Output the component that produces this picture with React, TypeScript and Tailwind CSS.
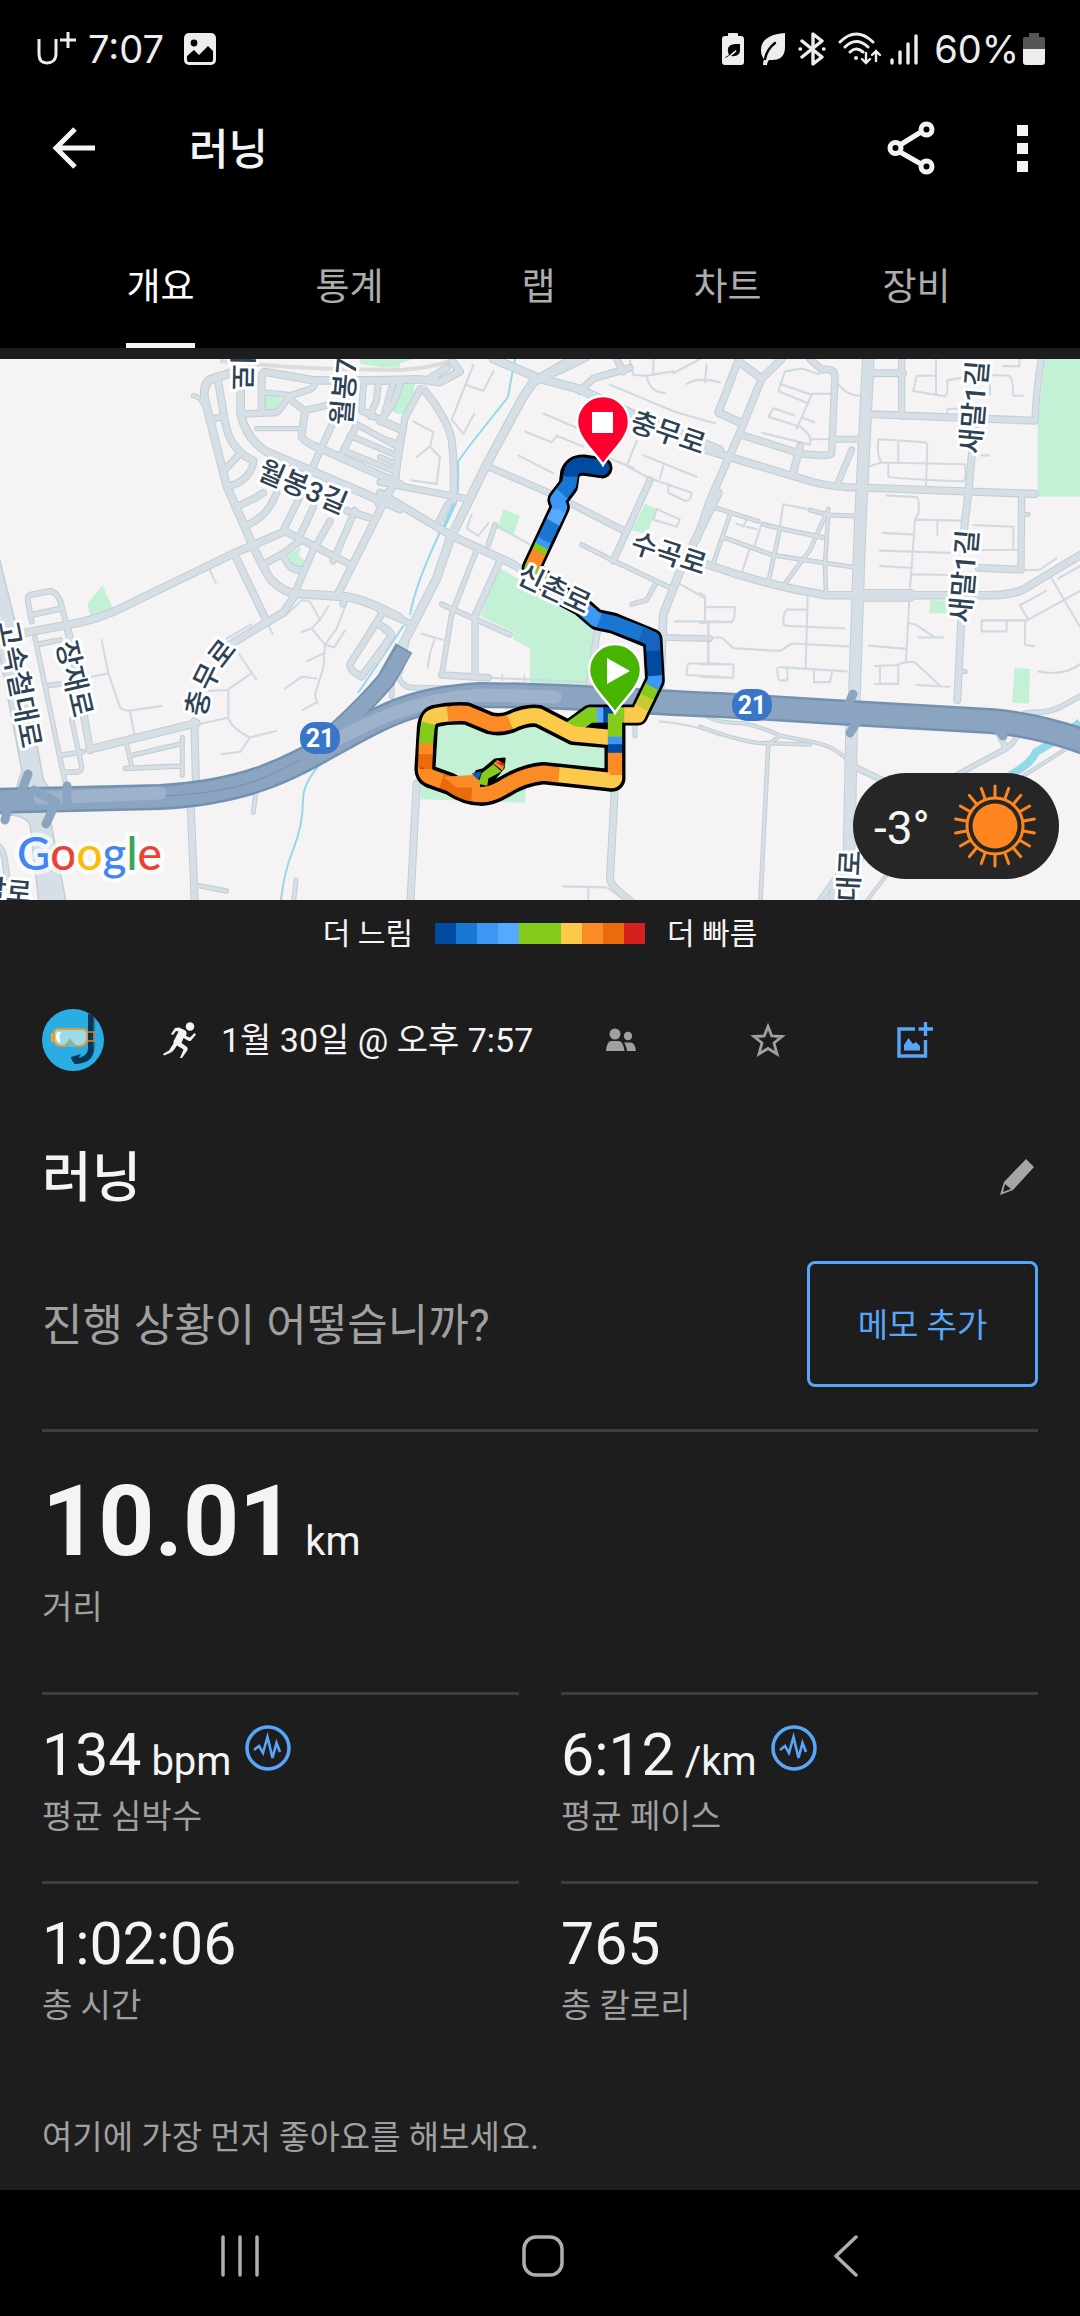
import React from "react";
import { clsx } from "clsx";

type Road = [width: number, d: string];

type Tile = {
  transform: string;
  parks: string[];
  roads: Road[];
  lanes: string;
};

// each tile keeps its own drawing units, see the transforms
const tiles: Tile[] = [
  {
    transform: "translate(0 350) scale(0.3333 0.3571)",
    parks: [
      "M790 125H850L830 165H790Z",
      "M262 710L290 680L307 658L340 725L272 747Z",
      "M855 580L905 550L895 575L915 590L905 612L875 605Z",
      "M1080 20H1200V50Q1130 50 1080 38Z",
      "M1200 130L1180 175L1200 180Z",
    ],
    roads: [
      [20, "M40 798L200 770Q300 755 380 715L700 570L850 510"],
      [14, "M95 760L85 710Q78 690 95 685L150 675Q165 675 180 700L200 770"],
      [14, "M95 742L180 725"],
      [20, "M200 770L215 830L270 1120"],
      [12, "M105 805L195 1210M110 825L180 812M145 940L180 935"],
      [12, "M215 1035L245 1165Q245 1180 230 1182H190M180 1135L250 1125"],
      [20, "M270 1118L590 1045"],
      [11, "M380 1105L395 1165M395 1135L545 1102M375 1172L545 1165M547 1085V1190"],
      [20, "M583 1040L588 1215M572 1270L585 1568"],
      [20, "M680 830L850 735L890 680"],
      [20, "M705 575L795 750"],
      [22, "M700 62L640 80Q605 90 615 140L680 380L760 550Q790 610 810 640Q850 680 890 682L1020 690Q1080 690 1200 750"],
      [11, "M580 128Q600 130 612 155"],
      [20, "M655 90L675 200Q690 280 760 310"],
      [16, "M625 195L665 188"],
      [22, "M722 110V180Q740 250 800 285L1200 445"],
      [17, "M722 180L830 175Q840 170 865 130L930 110Q945 105 945 85"],
      [20, "M785 165V75Q785 62 800 62L940 85L1200 85"],
      [14, "M785 118L860 125"],
      [17, "M865 135L915 170L1000 150"],
      [20, "M915 170L905 240Q905 255 960 275L1200 375"],
      [11, "M770 220H905"],
      [18, "M1010 180L940 325M1070 210L1020 300"],
      [17, "M1090 100L1085 170L1200 220M1135 95L1130 140L1110 185M1180 90L1150 190"],
      [15, "M1065 205L1200 275M1050 240L1190 295M1040 285L1185 340"],
      [20, "M1200 250L1185 370L1150 430L1010 690"],
      [18, "M690 380Q740 370 760 320M675 335L720 290M705 440Q760 420 790 400M740 490Q800 470 830 400"],
      [18, "M900 410L850 505L1050 600M940 440L895 530M990 480L940 560L880 690M1065 450L1000 590M1040 450L1110 470"],
      [18, "M790 600L850 570L900 535M850 575Q870 620 900 615"],
      [18, "M1145 740L1050 880Q1045 895 1085 915L1175 800Q1180 790 1130 765"],
      [20, "M1030 690V710"],
      [11, "M770 1225L760 1295M888 1485L878 1568M595 1500L680 1515"],
      [16, "M-4 1390Q12 1400 16 1440L24 1500"],
    ],
    lanes:
      "M305 812L325 905L360 1000Q365 1010 390 1010L485 997M390 1010L403 1075M275 915L325 905M718 852L768 922M755 905L685 950V1030Q695 1060 750 1085L828 1067M750 1085L722 1125L665 1132M595 1048L685 1030M625 955L685 952M628 612L648 655M800 760L818 795M680 808L755 768M855 745L905 700L930 705L960 755L935 780L905 790M985 718L960 755M1035 720L1010 780L975 825L935 780M975 825L1003 833L1035 785M975 825L970 890L945 965L952 990M970 850L920 872M950 920L905 915L855 948M952 985L908 1008",
  },
  {
    transform: "translate(380 350) scale(0.3333 0.3571)",
    parks: [
      "M360 610L300 745L400 790V810L450 835V940L615 945L645 770Z",
      "M165 1045L300 1045L450 1040L560 1100L680 1110V1180L300 1230L165 1170Z",
      "M120 1200L122 1258L435 1268L438 1215L300 1250Z",
      "M60 95L105 90L100 130L75 182L35 170Z",
      "M0 20H110Q50 45 0 50Z",
      "M370 445L420 465L400 520L352 500Z",
      "M795 430L830 445L800 515L755 505Z",
    ],
    roads: [
      [20, "M-10 85L120 82L180 90L240 60L215 30M150 80L200 50"],
      [20, "M135 115Q200 190 215 250Q225 330 220 420"],
      [18, "M60 95L40 150L0 200M120 110L75 190L40 380L-5 430"],
      [14, "M0 200L60 225M0 245L60 265M0 300L50 320"],
      [17, "M0 370L250 415"],
      [20, "M0 400L215 520L400 600L650 760"],
      [24, "M580 25L460 90L430 130L320 320L210 530L170 640L60 840"],
      [22, "M340 25L480 80L600 110L760 180L1020 280"],
      [18, "M480 80Q560 50 620 20M600 115L640 80L750 50M710 25L730 60"],
      [17, "M320 325L520 405L740 510"],
      [18, "M205 430L178 478"],
      [13, "M290 560L215 740L185 910M345 490L325 545"],
      [18, "M360 590L285 745V910"],
      [13, "M185 712L390 797"],
      [17, "M185 910L325 918"],
      [16, "M0 730L90 765L60 900M0 770L35 800L-10 870"],
      [13, "M45 860Q50 940 90 945L300 950M35 900V970"],
      [18, "M655 770L625 950"],
      [11, "M605 545L700 590L870 665"],
      [18, "M810 365L700 590"],
      [22, "M1015 400L900 620L850 740L840 960"],
      [11, "M830 650L800 700L755 712M765 1045V1080"],
      [15, "M850 805L990 808"],
      [20, "M110 1215L90 1568M705 1220L690 1480Q690 1500 760 1550"],
    ],
    lanes:
      "M280 42L215 195M260 98L310 115L340 60M215 195L250 235L283 178M100 200L160 230L150 270L110 300M150 270L180 300L170 375L95 365M275 460L260 500L295 520L325 485M345 490L450 545M435 228L515 258L530 240L610 270M490 178L600 222M415 295L520 345M690 97L890 175L1005 205M790 295L950 355M770 255L740 325L810 360L860 375L935 400Q930 430 910 420L865 400V375M850 325L840 360M680 300L760 330M830 445L900 475L890 495L820 475L830 445M125 795L190 812M165 805L150 850L143 890M330 918L620 930M367 910V925M433 912V928M890 650L975 695V760M885 760H1020M985 760V880M1020 878H925Q920 885 920 910L1020 915M550 1502L680 1505L720 1530M625 1505V1568M750 30L760 70L800 72L880 60M820 25V65M800 72Q810 120 855 120M920 95Q950 75 1020 90M880 65L960 25M975 90L980 40M0 1058Q80 1015 150 1010M840 1040Q950 1050 1020 1080",
  },
  {
    transform: "translate(700 350) scale(0.3333 0.3571)",
    parks: [
      "M1035 20H1140V410H1013V200Z",
      "M690 700L740 702V738H688Z",
      "M943 890L990 893L987 990L937 988Z",
    ],
    roads: [
      [34, "M505 20L480 500L463 980M455 1050L447 1420L380 1590"],
      [20, "M115 30L55 175L125 205M245 25L185 80L120 230L30 420L-10 530M120 35L185 80"],
      [18, "M330 25L365 55Q405 50 405 75L395 290Q390 300 300 290L125 238"],
      [20, "M300 270L278 350"],
      [16, "M400 250H480M415 370L455 280"],
      [19, "M0 275L340 370Q400 385 480 385L1005 403"],
      [18, "M520 65H610M605 20V185M515 180L1005 198Q1010 100 1025 20"],
      [20, "M825 200L805 400L790 520M785 740L772 980"],
      [18, "M965 405L963 615L835 610"],
      [10, "M963 460H985M785 900H797"],
      [20, "M20 600Q200 660 380 687H870Q950 685 980 665L1140 575"],
      [32, "M490 687H630"],
      [10, "M40 440L175 480M90 460L35 610M70 525L220 575L460 608M190 488L240 500L370 525M240 500L205 650M385 445L330 560L250 660M385 460L375 600L378 680M330 448L385 462L465 465"],
      [13, "M770 1190L920 1115Q960 1090 965 1030Q960 1015 1000 1015Q1050 1015 1080 1000L1140 970"],
      [16, "M900 1080L915 1110"],
      [8, "M975 1190L1110 1110H1140M0 1055Q100 1090 170 1100L330 1105M20 1025Q50 1045 130 1045Q200 1060 240 1080L350 1100Q400 1110 440 1145M240 1080L205 1105M480 1568L560 1470"],
      [10, "M205 1100L180 1568"],
      [15, "M470 1170L560 1210M340 1568L430 1450"],
    ],
    lanes:
      "M358 68L305 52L255 60L235 115L325 150M240 95L335 125L290 220M335 123H395M283 183L220 163L205 187L300 215Q340 240 330 265L187 232M308 190L342 202M330 250H390M410 90Q440 130 485 128M708 25V125M708 72H650L640 115L735 130Q745 120 742 85L800 75M870 125V70L925 72Q940 75 940 128H968M908 45H958V25M742 175V165H800M510 325L545 315Q530 300 535 250L670 258Q682 258 682 270L678 380M595 255V315M565 315V355Q565 360 790 368Q800 360 795 320L545 315M845 295H867M560 407L650 412Q660 415 655 460L645 475L630 670M645 475L785 478M712 480V518M548 512L640 517M540 562L750 568M540 605L635 610M635 628L745 630M820 490L940 495V558M845 560H950M965 617L1020 615L1070 583M250 432L320 445M250 432L240 490M185 485L165 545M110 487L170 502M140 475L130 495M150 555L125 625M0 680L15 690V762H95Q105 755 105 720H15M0 765H25V880M0 880H100V918L0 915M30 805H65L100 835L240 843L275 822L445 830M323 690L317 888M323 727H265Q250 727 250 765Q250 773 270 773L433 780M240 888L440 900M262 888V925H240Q232 925 232 890M342 895V930H390L397 897M628 700L618 870M507 828L618 837M628 765L645 768L705 805M655 805H730M525 885L590 882Q620 870 645 875L720 940M595 885V935H525M540 885V935M650 938L748 943M1038 675L960 715L985 755L1140 675M1055 640L1140 775M1075 640L1140 605M985 757H845V788H920V757M975 757V825L1003 830M1015 900Q1090 915 1140 880",
  },
];

const routeLoop =
  "M705 1020L705 1200Q702 1207 690 1205L490 1185Q430 1190 370 1225Q330 1247 300 1245Q260 1245 210 1215L150 1195Q133 1188 135 1170L142 1060Q145 1030 165 1025Q210 1015 260 1018L330 1045Q360 1052 390 1042Q440 1020 475 1025L580 1075L705 1085";
const routeTail =
  "M580 1056L630 1022L775 1022L825 925L818 810L700 765L650 755L600 715L530 680L455 610L500 520L540 440L532 420L565 380L570 345Q580 322 610 322L668 330";

const routePaces: [color: string, d: string][] = [
  ["#84cc1b", "M570 1062L630 1022H652"],
  ["#fcca4a", "M145 1050Q145 1030 165 1025Q180 1021 205 1019"],
  ["#fb8b24", "M203 1020Q230 1016 260 1018L330 1045Q360 1052 392 1041"],
  ["#fcca4a", "M390 1042Q440 1020 475 1025L580 1075L690 1085"],
  ["#55a9ff", "M650 1022H672"],
  ["#004a9f", "M670 1022H700"],
  ["#84cc1b", "M705 1018V1085"],
  ["#3d97f5", "M705 1083V1106"],
  ["#004a9f", "M705 1104V1130"],
  ["#fb8b24", "M705 1128V1192"],
  ["#fcca4a", "M705 1190V1200Q702 1207 690 1205L535 1189"],
  ["#fb8b24", "M537 1190L490 1185Q430 1190 370 1225Q330 1247 300 1245Q285 1245 265 1240"],
  ["#ea6a0c", "M275 1242Q250 1240 210 1215L180 1205"],
  ["#fb8b24", "M185 1207L150 1195Q133 1188 135 1168"],
  ["#ea6a0c", "M135 1172L137 1130"],
  ["#fb8b24", "M137 1132L138 1100"],
  ["#84cc1b", "M138 1102L142 1060L145 1045"],
  ["#84cc1b", "M700 1022H735"],
  ["#fcca4a", "M733 1022H775L786 1000"],
  ["#c6cb35", "M785 1002L803 968"],
  ["#84cc1b", "M801 971L817 940"],
  ["#3d97f5", "M816 943L825 925V910"],
  ["#004a9f", "M825 912L820 840"],
  ["#1565c0", "M820 842L818 810L780 793"],
  ["#1976d2", "M783 795L700 765L655 756"],
  ["#3d97f5", "M658 757L645 752L600 715"],
  ["#55a9ff", "M602 716L530 680L490 643"],
  ["#84cc1b", "M492 645L455 610L460 600"],
  ["#fb8b24", "M459 602L480 560"],
  ["#84cc1b", "M478 564L486 547"],
  ["#3d97f5", "M485 549L494 531"],
  ["#1976d2", "M493 533L520 480"],
  ["#55a9ff", "M519 482L538 445"],
  ["#3d97f5", "M537 447L540 440L532 420L548 400"],
  ["#1976d2", "M546 402L568 375L572 350"],
  ["#004a9f", "M572 354Q572 322 610 322L668 330"],
];

const mapLabels: { text: string; at: string; anchor?: "start" | "end" }[] = [
  { text: "월봉3길", at: "translate(299 496) rotate(23)" },
  { text: "충무로", at: "translate(665 442) rotate(19)" },
  { text: "수곡로", at: "translate(666 563) rotate(18)" },
  { text: "신촌로", at: "translate(550 598) rotate(25)" },
  { text: "새말1길", at: "translate(984 408) rotate(-85)" },
  { text: "새말1길", at: "translate(974 577) rotate(-85)" },
  { text: "고속철대로", at: "translate(10 686) rotate(79)" },
  { text: "장재로", at: "translate(65 681) rotate(77)" },
  { text: "월봉7길", at: "translate(351 426) rotate(-85)", anchor: "start" },
  { text: "대로", at: "translate(232 390) rotate(91)", anchor: "end" },
  { text: "대로", at: "translate(858 902) rotate(-87)", anchor: "start" },
  { text: "할로", at: "translate(31 903) rotate(5)", anchor: "end" },
];

const legendColors = [
  "bg-[#004a9f]",
  "bg-[#1976d2]",
  "bg-[#3d97f5]",
  "bg-[#55a9ff]",
  "bg-[#84cc1b]",
  "bg-[#84cc1b]",
  "bg-[#fcca4a]",
  "bg-[#fb8b24]",
  "bg-[#ea6a0c]",
  "bg-[#d61f1f]",
];

const tabs = ["개요", "통계", "랩", "차트", "장비"];

const stats = [
  { value: "134", unit: "bpm", label: "평균 심박수", chart: true },
  { value: "6:12", unit: "/km", label: "평균 페이스", chart: true },
  { value: "1:02:06", label: "총 시간" },
  { value: "765", label: "총 칼로리" },
];

const PIN = "M0 0C-6 -11 -26 -26 -26 -43A26 26 0 0 1 26 -43C26 -26 6 -11 0 0Z";

const StatusBar = () => (
  <div className="flex h-[98px] items-center justify-between pr-[35px] pl-9 text-[38px] text-[#ededed] font-[Inter,sans-serif]">
    <div className="flex items-center">
      <svg width="40" height="34" viewBox="0 0 40 34" fill="none" stroke="currentColor" strokeWidth="3">
        <path d="M3 7V22C3 28 6 31 11 31S20 28 20 22V7M32 0V16M24 8H40" />
      </svg>
      <span className="ml-3">7:07</span>
      <svg className="ml-5" width="32" height="32" viewBox="0 0 32 32">
        <rect width="32" height="32" rx="5" fill="currentColor" />
        <circle cx="10" cy="10" r="3.4" fill="#000" />
        <path d="M3 23L10 17L15 22L24 13L29 18V27Q29 29 27 29H5Q3 29 3 27Z" fill="#000" />
      </svg>
    </div>
    <div className="flex items-center">
      <svg width="22" height="32" viewBox="0 0 22 32">
        <path d="M7 0H15Q16 0 16 1V3H19Q22 3 22 6V29Q22 32 19 32H3Q0 32 0 29V6Q0 3 3 3H6V1Q6 0 7 0Z" fill="currentColor" />
        <path d="M18 11V17Q18 24 9 23Q16 18 14 17Q12 18 8 22Q4 25 3 25Q3 24 7 22Q3 12 13 11Z" fill="#000" />
      </svg>
      <svg className="ml-4" width="26" height="34" viewBox="0 0 26 34">
        <path d="M25 1V15Q25 28 12 28H9Q7 30 7 33H3Q3 30 4 27Q1 24 1 18Q1 3 25 1Z" fill="currentColor" />
        <path d="M15 11Q7 17 5 27" stroke="#000" strokeWidth="2.5" fill="none" strokeLinecap="round" />
      </svg>
      <svg className="ml-3" width="28" height="34" viewBox="0 0 28 34" fill="none" stroke="currentColor" strokeWidth="3.4" strokeLinejoin="round" strokeLinecap="round">
        <path d="M4 9L24 25L15 32V2L24 9L4 25M2 17H2.5M25.5 17H26" />
      </svg>
      <svg className="ml-3" width="44" height="34" viewBox="0 0 44 34" fill="none" stroke="currentColor" strokeWidth="3" strokeLinecap="round">
        <path d="M2 10Q18 -6 35 10M7 15Q18 4 30 15M12 20Q18 14 25 20" />
        <circle cx="18" cy="26" r="2" fill="currentColor" stroke="none" />
        <path d="M28 21V31M24 27L28 31L32 27M38 29V19M34 23L38 19L42 23" strokeWidth="2.4" />
      </svg>
      <svg className="ml-2" width="28" height="32" viewBox="0 0 28 32" stroke="currentColor" strokeWidth="3.4" strokeLinecap="round">
        <path d="M2 27V30M10 19V30M18 11V30M26 3V30" />
      </svg>
      <span className="ml-4">60%</span>
      <svg className="ml-1" width="22" height="32" viewBox="0 0 22 32">
        <path d="M6 0H16V4H20Q22 4 22 6V16H0V6Q0 4 2 4H6Z" fill="#555" />
        <path d="M0 16H22V29Q22 32 19 32H3Q0 32 0 29Z" fill="currentColor" />
      </svg>
    </div>
  </div>
);

const AppBar = () => (
  <div className="flex h-[100px] items-center px-[52px] text-[#f4f4f4]">
    <button aria-label="뒤로">
      <svg width="43" height="42" viewBox="0 0 43 42" fill="none" stroke="currentColor" strokeWidth="5">
        <path d="M23 2L4 21L23 40M4 21H43" />
      </svg>
    </button>
    <h1 className="ml-[94px] pt-1 text-[43px] leading-[50px] font-medium">러닝</h1>
    <button aria-label="공유" className="ml-auto">
      <svg width="48" height="54" viewBox="0 0 48 54" fill="none" stroke="currentColor" strokeWidth="5">
        <path d="M13 24L34 11M13 31L34 43" />
        <circle cx="8.5" cy="27" r="5.5" />
        <circle cx="39.5" cy="8.5" r="5.5" />
        <circle cx="39.5" cy="45.5" r="5.5" />
      </svg>
    </button>
    <button aria-label="더보기" className="ml-[82px] flex flex-col gap-[7px]">
      <span className="size-[11px] bg-current" />
      <span className="size-[11px] bg-current" />
      <span className="size-[11px] bg-current" />
    </button>
  </div>
);

const Tabs = () => (
  <nav role="tablist" className="grid grid-cols-5 justify-items-center pr-[69px] pl-[66px]">
    {tabs.map((tab, i) => (
      <button
        key={tab}
        role="tab"
        aria-selected={i === 0}
        className={clsx(
          "h-[150px] border-b-[5px] pt-[34px] text-[37px]",
          i === 0 ? "border-[#f4f4f4] text-white" : "border-transparent text-[#adadad]",
        )}
      >
        {tab}
      </button>
    ))}
  </nav>
);

const Shield = ({ at }: { at: string }) => (
  <g transform={at}>
    <rect x="-20" y="-16" width="40" height="32" rx="15" fill="#3a76c8" />
    <text y="9" textAnchor="middle" className="fill-white text-[25px] font-bold">
      21
    </text>
  </g>
);

const RouteMap = () => (
  <svg className="block w-full" viewBox="0 359 1080 541" role="img" aria-label="러닝 경로">
    <rect y="359" width="1080" height="541" fill="#f5f3f4" />
    {tiles.map((tile) => (
      <g key={tile.transform} transform={tile.transform} fill="#c3f1d5">
        {tile.parks.map((d) => (
          <path key={d} d={d} />
        ))}
      </g>
    ))}
    <g fill="none" stroke="#93d9ea">
      <path d="M515 359L510 385Q509 398 505 401L470 445L457 463" strokeWidth="2" />
      <path d="M457 461Q458 500 454 505L441 533" strokeWidth="4" />
      <path d="M441 530Q415 585 410 615" strokeWidth="2" />
      <path d="M404 625L358 693M332 753Q303 778 303 800Q303 825 293 850Q284 872 281 900" strokeWidth="2" />
      <path d="M1010 775Q1030 765 1036 752L1060 738L1080 722" strokeWidth="8" />
      <path d="M866 852L858 866" strokeWidth="4" />
    </g>
    <path d="M220 361Q300 370 400 370Q430 368 450 361" fill="none" stroke="#dcdcde" strokeWidth="4" />
    {tiles.map((tile) => (
      <g key={tile.transform} transform={tile.transform} fill="none" stroke="#cfdae2" strokeWidth="6" strokeLinejoin="round" strokeLinecap="round">
        <path d={tile.lanes} />
      </g>
    ))}
    <path
      d="M-4 545L15 621L43 778Q46 789 56 789L50 818L68 912H40L30 825Q26 814 -4 814V789H16L22 771L-4 636Z"
      fill="#d6dfe6"
      stroke="#c2ced5"
      strokeWidth="1.5"
    />
    {tiles.map((tile) => (
      <g key={tile.transform} transform={tile.transform} fill="none" stroke="#c2ced5" strokeLinejoin="round" strokeLinecap="round">
        {tile.roads.map(([width, d]) => (
          <path key={d} d={d} strokeWidth={width + 4} />
        ))}
      </g>
    ))}
    {tiles.map((tile) => (
      <g key={tile.transform} transform={tile.transform} fill="none" stroke="#d6dfe6" strokeLinejoin="round" strokeLinecap="round">
        {tile.roads.map(([width, d]) => (
          <path key={d} d={d} strokeWidth={width - 2} />
        ))}
      </g>
    ))}
    <circle cx="424" cy="387" r="2" fill="#f5f3f4" stroke="#c2ced5" />

    {/* route 21 */}
    <g fill="none" strokeLinejoin="round">
      <g stroke="#7391b0">
        <path d="M404 648L386 680Q365 705 335 732" strokeWidth="19" />
        <path d="M-10 801L160 797C250 792 290 768 340 740C380 718 410 699 480 695C560 695 640 702 720 705L850 713L990 721Q1040 725 1090 744" strokeWidth="26" />
      </g>
      <g stroke="#8ba5c1">
        <path d="M404 650L386 680Q365 705 335 732" strokeWidth="15" />
        <path d="M-10 801L160 797C250 792 290 768 340 740C380 718 410 699 480 695C560 695 640 702 720 705L850 713L990 721Q1040 725 1090 744" strokeWidth="21" />
      </g>
      <path d="M40 798L160 793M320 748C370 722 410 700 480 695L555 697" stroke="#9fb2cb" strokeWidth="13" strokeLinecap="round" />
      <path d="M165 796C250 791 270 775 300 760" stroke="#7391b0" />
      <path d="M5 820L10 798M22 790L28 774M46 824L56 802L34 790M67 786V806M844 714L853 694M850 733L858 720M997 728L1003 736" stroke="#8ba5c1" strokeWidth="9" strokeLinecap="round" />
    </g>

    <g transform="translate(380 350) scale(0.3333 0.3571)" fill="none" strokeLinejoin="round">
      <g stroke="#000" strokeWidth="63" strokeLinecap="round">
        <path d={routeLoop} />
        <path d={routeTail} strokeWidth="59" />
      </g>
      <path d="M275 1205L290 1180L310 1175L345 1148L373 1145L370 1170L330 1215Z" fill="#000" stroke="#000" strokeWidth="8" />
      <g strokeWidth="43">
        {routePaces.map(([color, d]) => (
          <path key={d} d={d} stroke={color} />
        ))}
      </g>
      <path d="M650 328L668 330" stroke="#004a9f" strokeWidth="41" strokeLinecap="round" />
      <path d="M190 1195L280 1190L300 1205V1225H230Z" fill="#fb8b24" />
      <path d="M275 1185L305 1180L295 1205Z" fill="#0d5cb5" />
      <path d="M295 1215L305 1185L340 1160L365 1180L325 1200L322 1220Z" fill="#84cc1b" />
      <path d="M340 1158L352 1148L374 1160L368 1178Z" fill="#fb8b24" />
      <path d="M345 1153L374 1158L370 1166Z" fill="#d61f1f" />
      <path d="M120 1171H134" stroke="#d61f1f" strokeWidth="3" />
    </g>

    <g className="fill-[#2e4255] text-[28px] font-medium" stroke="#fff" strokeWidth="6" strokeLinejoin="round" paintOrder="stroke">
      {mapLabels.map(({ text, at, anchor = "middle" }) => (
        <text key={at} transform={at} textAnchor={anchor}>
          {text}
        </text>
      ))}
      <path id="curve" d="M206 718Q208 680 243 644" fill="none" stroke="none" />
      <text>
        <textPath href="#curve">충무로</textPath>
      </text>
    </g>
    <Shield at="translate(320 738)" />
    <Shield at="translate(752 705)" />

    <g stroke="#fff" strokeWidth="2.5">
      <g transform="translate(603 465)">
        <path d={PIN} fill="#ff002e" />
        <rect x="-11" y="-53" width="21" height="21" fill="#fff" stroke="none" />
      </g>
      <g transform="translate(615 713)">
        <path d={PIN} fill="#46b400" />
        <path d="M-8 -55V-29L15 -42Z" fill="#fff" stroke="none" />
      </g>
    </g>

    <text x="17" y="870" className="text-[46px] font-medium font-[Lato,sans-serif]" stroke="#fff" strokeOpacity="0.7" strokeWidth="9" strokeLinejoin="round" paintOrder="stroke">
      <tspan fill="#4285f4">G</tspan>
      <tspan fill="#ea4335">o</tspan>
      <tspan fill="#fbbc05">o</tspan>
      <tspan fill="#4285f4">g</tspan>
      <tspan fill="#34a853">l</tspan>
      <tspan fill="#ea4335">e</tspan>
    </text>
  </svg>
);

const Weather = () => (
  <div className="absolute right-[21px] bottom-[21px] flex h-[106px] w-[206px] items-center justify-between rounded-full bg-[#262626] pt-1 pr-[22px] pl-[21px] text-[46px] text-[#f4f4f4]">
    <span>-3°</span>
    <svg className="mb-1" width="84" height="84" viewBox="-42 -42 84 84" fill="none" stroke="#ff861f">
      <circle r="22.5" fill="#ff861f" stroke="none" />
      <circle r="28" strokeWidth="3" />
      {Array.from({ length: 18 }, (_, i) => (
        <path key={i} d="M0 -29V-40" strokeWidth="3" strokeLinecap="round" transform={`rotate(${i * 20})`} />
      ))}
    </svg>
  </div>
);

const Avatar = () => (
  <svg width="62" height="62" viewBox="0 0 62 62">
    <defs>
      <clipPath id="avatar">
        <circle cx="31" cy="31" r="31" />
      </clipPath>
    </defs>
    <g clipPath="url(#avatar)">
      <rect width="62" height="62" fill="#2aade3" />
      <path d="M49 5V39Q49 52 32 52" fill="none" stroke="#0b3554" strokeWidth="6" />
      <path d="M52 8V40" stroke="#41617a" strokeWidth="1.5" />
      <path d="M29 48L39 45L36 50L38 54Q30 56 29 48Z" fill="#0b3554" />
      <rect x="9" y="24" width="3" height="9" rx="1" fill="#f9a61a" />
      <path d="M45 23H52V32H45Z" fill="#0b3554" stroke="#c98a3c" strokeWidth="1.5" />
      <path d="M16 20H40Q45 20 45 25V30Q44 37 38 37H33L28 31L23 37H18Q12 36 12 30V25Q12 20 16 20Z" fill="#9edbe8" stroke="#e59a3c" strokeWidth="2" />
      <path d="M16 23H19Q16 28 19 34Q14 33 14 28Q14 24 16 23Z" fill="#fff" />
      <path d="M28 29L32 38H25Z" fill="#5cbfe0" />
    </g>
  </svg>
);

const ActivityMeta = () => (
  <div className="mt-[43px] flex items-center text-[#f4f4f4]">
    <Avatar />
    <svg className="ml-[59px]" width="34" height="36" viewBox="0 0 34 36" fill="currentColor">
      <circle cx="27" cy="4.5" r="4.3" />
      <path d="M12 6L16 5.5L21.5 8Q24 9 23.5 12L23 14L27 15.5L31.5 11L33 12.5L28 18.5Q27 19.5 25 18.5L20.5 16L18.5 21L24 25Q25 26 24.5 28L19 36H17L20.5 27.5L14 23.5Q12 26.5 10 29Q9 30 7 31L1 33.5L0 32L6 28.5L10.5 21.5Q10 19 12 16.5L15.5 9.5L13 9L10 13L8 12Z" />
    </svg>
    <span className="ml-6 text-[34px]">1월 30일 @ 오후 7:57</span>
    <div className="mr-[50px] ml-auto flex text-[#a0a0a0]">
      <button aria-label="공개 범위" className="flex w-[147px] items-center justify-center">
        <svg width="30" height="24" viewBox="0 0 30 24" fill="currentColor">
          <circle cx="9" cy="6" r="5.5" />
          <circle cx="22" cy="8" r="4.2" />
          <path d="M0 23Q1 13 5 13H13Q17 13 18.5 23ZM18 14.5H24Q29 14 30 23H21Q20 17 18 14.5Z" />
        </svg>
      </button>
      <button aria-label="즐겨찾기" className="flex w-[147px] items-center justify-center">
        <svg width="36" height="34" viewBox="0 0 36 34" fill="none" stroke="currentColor" strokeWidth="2.8">
          <path d="M18 3.5L21.7 13L32 13.5L24 20L27 31L18 25.5L9 31L12 20L4 13.5L14.3 13Z" />
        </svg>
      </button>
      <button aria-label="사진 추가" className="flex w-[147px] items-center justify-center text-[#58a6f9]">
        <svg width="36" height="36" viewBox="0 0 36 36" fill="none" stroke="currentColor" strokeWidth="3.4">
          <path d="M18 7H2V34H28.5V18M28.5 0V14M21.5 7H36" />
          <path d="M7 28.5V23L11.5 16L16 22L19 20L23 24V28.5Z" fill="currentColor" stroke="none" />
        </svg>
      </button>
    </div>
  </div>
);

const ChartButton = ({ label }: { label: string }) => (
  <button aria-label={`${label} 차트`} className="ml-[14px] text-[#58a6f9]">
    <svg width="46" height="46" viewBox="0 0 46 46" fill="none" stroke="currentColor">
      <circle cx="23" cy="23" r="21" strokeWidth="3.5" />
      <path d="M9 25L14 21L18 28L22.5 12L27.5 33L31.5 18L35 27" strokeWidth="2.6" />
    </svg>
  </button>
);

const NavBar = () => (
  <nav className="grid h-[126px] grid-cols-3 items-center justify-items-center bg-black pt-1.5 pr-[83px] pl-[88px] text-[#aeaeae]">
    <button aria-label="최근 앱">
      <svg width="40" height="42" viewBox="0 0 40 42" stroke="currentColor" strokeWidth="3.5" strokeLinecap="round">
        <path d="M3 2V40M20 2V40M37 2V40" />
      </svg>
    </button>
    <button aria-label="홈">
      <svg width="42" height="42" viewBox="0 0 42 42" fill="none" stroke="currentColor" strokeWidth="3.5">
        <rect x="2" y="2" width="38" height="38" rx="12" />
      </svg>
    </button>
    <button aria-label="이전">
      <svg width="26" height="42" viewBox="0 0 26 42" fill="none" stroke="currentColor" strokeWidth="3.5" strokeLinejoin="round" strokeLinecap="round">
        <path d="M23 2L3 21L23 40" />
      </svg>
    </button>
  </nav>
);

const App = () => {
  return (
    <div className="flex min-h-screen flex-col bg-[#1d1d1d] font-[Roboto,'Noto_Sans_CJK_KR',sans-serif] text-[#f4f4f4]">
      <header className="bg-black">
        <StatusBar />
        <AppBar />
        <Tabs />
      </header>

      <div className="relative mt-[11px]">
        <RouteMap />
        <Weather />
      </div>

      <div className="flex h-[66px] items-center justify-center gap-[22px] text-[30px]">
        <span>더 느림</span>
        <div className="flex h-[21px] w-[210px]">
          {legendColors.map((color, i) => (
            <span key={i} className={clsx("flex-1", color)} />
          ))}
        </div>
        <span>더 빠름</span>
      </div>

      <main className="grow px-[42px] pb-8">
        <ActivityMeta />

        <div className="mt-[67px] flex h-[78px] items-center justify-between">
          <h2 className="pt-1 text-[54px] leading-[60px] font-medium">러닝</h2>
          <button aria-label="이름 편집" className="text-[#a6a6a6]">
            <svg width="38" height="38" viewBox="0 0 38 38" fill="currentColor">
              <path d="M26 1L34 9L13 32L0 37L4 24ZM5 26L3 34L11 31Z" fillRule="evenodd" />
            </svg>
          </button>
        </div>

        <div className="mt-[45px] flex items-center justify-between border-b-[3px] border-[#3e3e3e] pb-[42px]">
          <p className="pt-1 text-[44px] text-[#a0a0a0]">진행 상황이 어떻습니까?</p>
          <button className="h-[126px] w-[231px] rounded-lg border-[3px] border-[#58a6f9] pt-1 text-[33px] text-[#58a6f9]">
            메모 추가
          </button>
        </div>

        <div className="pt-10 pb-16">
          <div className="text-[98px] leading-[100px] font-bold">
            10.01<span className="text-[40px] leading-none font-normal"> km</span>
          </div>
          <div className="mt-4 text-[33px] leading-[40px] text-[#a0a0a0]">거리</div>
        </div>

        <div className="grid grid-cols-2 gap-x-[42px]">
          {stats.map(({ value, unit, label, chart }) => (
            <div key={label} className="border-t-[3px] border-[#3e3e3e] pt-[30px] pb-11">
              <div className="flex h-[60px] items-start">
                <div className="text-[59px] leading-[60px]">
                  {value}
                  {unit && <span className="text-[40px] leading-none"> {unit}</span>}
                </div>
                {chart && <ChartButton label={label} />}
              </div>
              <div className="mt-3 text-[33px] leading-[40px] text-[#a0a0a0]">{label}</div>
            </div>
          ))}
        </div>

        <p className="mt-12 text-[33px] leading-[40px] text-[#a0a0a0]">
          여기에 가장 먼저 좋아요를 해보세요.
        </p>
      </main>

      <NavBar />
    </div>
  );
};

export default App;
